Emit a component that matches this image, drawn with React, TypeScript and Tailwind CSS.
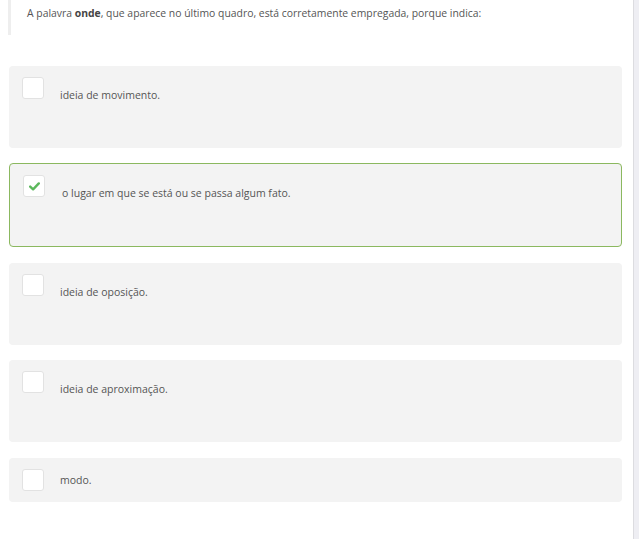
import React from "react";

type Option = {
  label: string;
  checked?: boolean;
  short?: boolean;
  mt: string;
};

const options: Option[] = [
  { label: "ideia de movimento.", mt: "mt-[31px]" },
  { label: "o lugar em que se está ou se passa algum fato.", checked: true, mt: "mt-[15px]" },
  { label: "ideia de oposição.", mt: "mt-[16px]" },
  { label: "ideia de aproximação.", mt: "mt-[15px]" },
  { label: "modo.", short: true, mt: "mt-[16px]" },
];

const CheckBox = ({ checked }: { checked?: boolean }) => (
  <div className="w-[22px] h-[22px] shrink-0 bg-white border border-[#e2e2e2] rounded-[3px] flex items-center justify-center">
    {checked && (
      <svg width="11" height="9" viewBox="0 0 11 9">
        <path
          d="M1.2 4.6 L4.1 7.3 L9.8 1.4"
          fill="none"
          stroke="#5cb85c"
          strokeWidth="2.4"
          strokeLinecap="round"
          strokeLinejoin="round"
        />
      </svg>
    )}
  </div>
);

const OptionCard = ({ option }: { option: Option }) => {
  const { label, checked, short, mt } = option;
  return (
    <div
      className={`${mt} flex items-start rounded-[4px] bg-[#f3f3f3] ${
        checked
          ? "h-[84px] border border-[#8bb85f] pt-[11px] pl-[13px]"
          : short
          ? "h-[44px] pt-[11px] pl-[13px]"
          : "h-[82px] pt-[11px] pl-[13px]"
      }`}
    >
      <CheckBox checked={checked} />
      <span
        className={`${checked ? "ml-[17px]" : "ml-[16px]"} ${
          short ? "pt-[3px]" : "pt-[10px]"
        } text-[10.5px] leading-[16px] text-[#555]`}
      >
        {label}
      </span>
    </div>
  );
};

export default function App() {
  return (
    <div
      className="flex w-[639px] h-[539px] bg-white overflow-hidden"
      style={{ fontFamily: '"Open Sans", "Liberation Sans", sans-serif' }}
    >
      {/* Question area */}
      <div className="w-[633px] shrink-0">
        <div className="ml-[8px] h-[35px] border-l-[3px] border-[#eeeeee] pl-[16px] pt-[5px]">
          <p className="text-[10.4px] leading-[16px] text-[#555]">
            A palavra <b className="font-bold text-[#444]">onde</b>, que aparece no último quadro, está
            corretamente empregada, porque indica:
          </p>
        </div>
        <div className="ml-[9px] w-[613px] flex flex-col">
          {options.map((o) => (
            <OptionCard key={o.label} option={o} />
          ))}
        </div>
      </div>
      {/* scrollbar track */}
      <div className="flex-1 border-l border-[#dcdce0] bg-[#eeeef3]" />
    </div>
  );
}
